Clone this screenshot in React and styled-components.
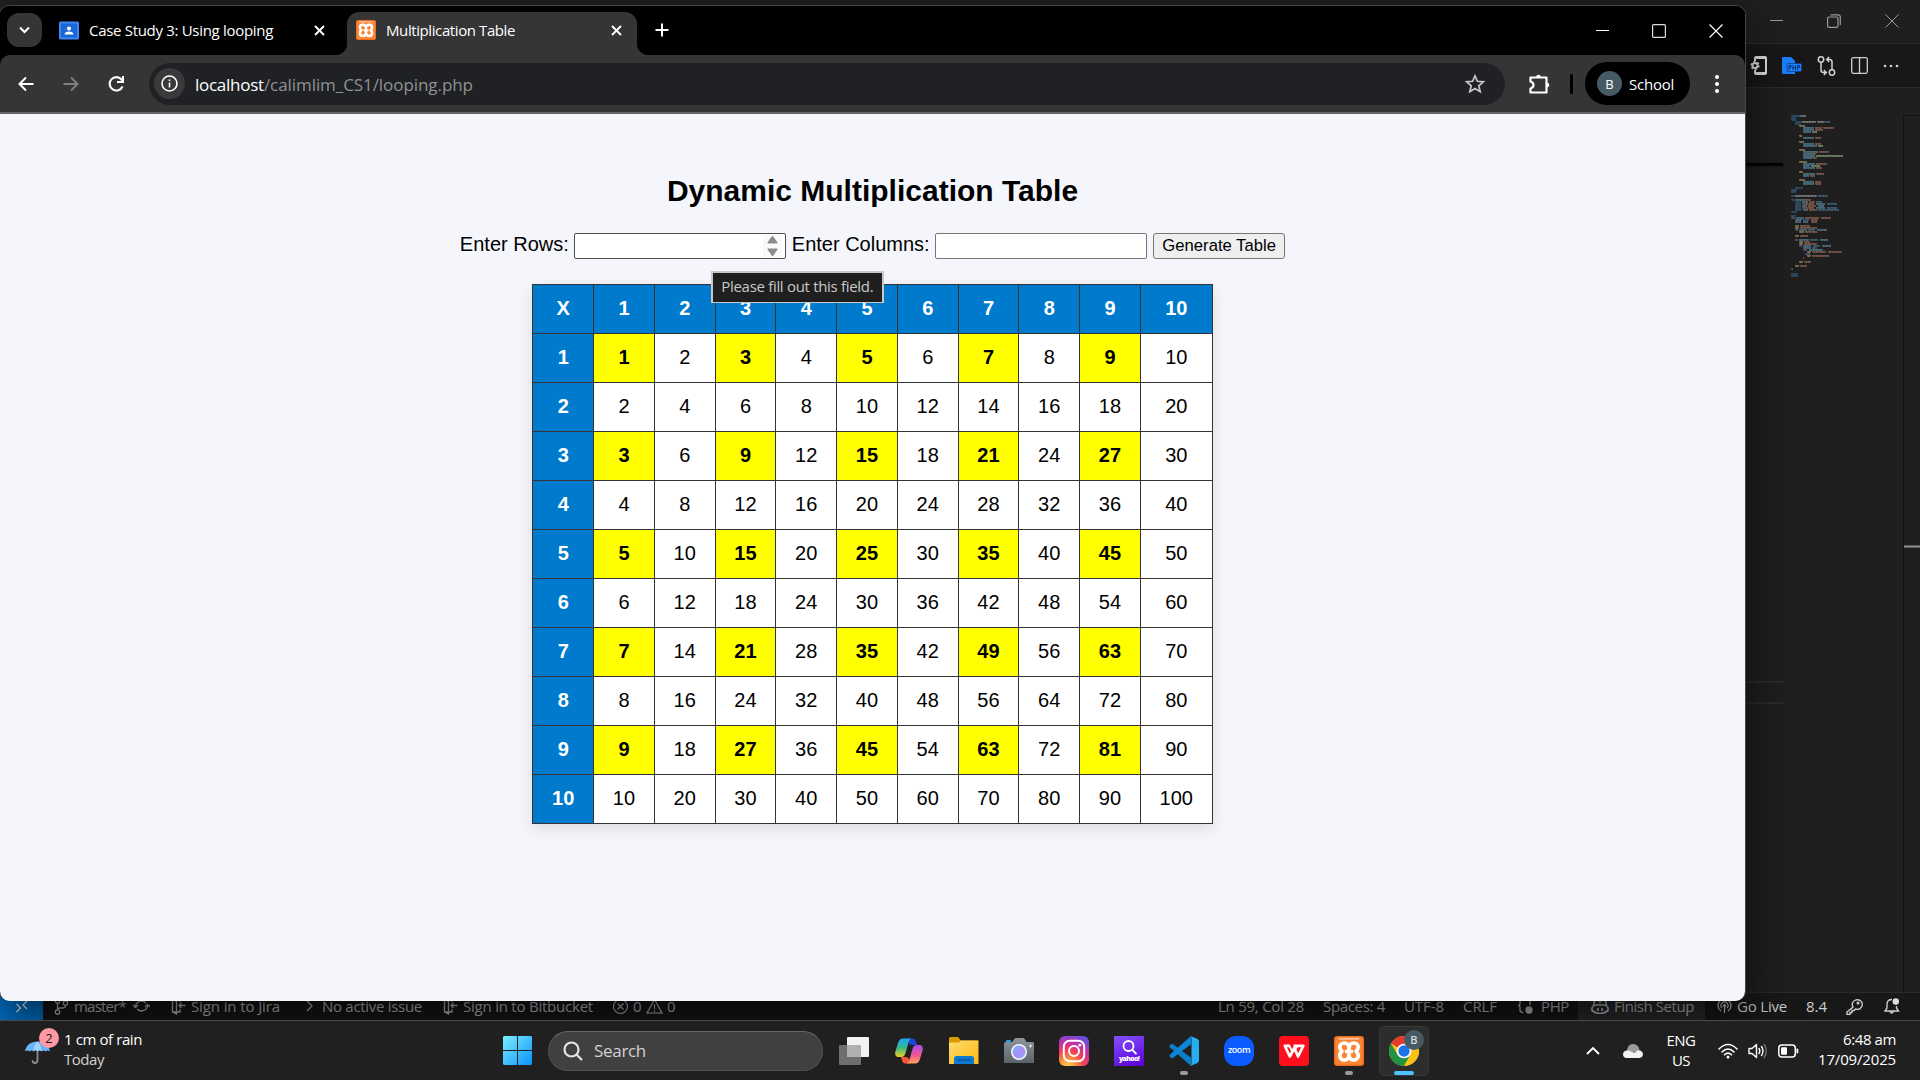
import React, { useLayoutEffect, useRef } from "react";
import styled, { createGlobalStyle, css } from "styled-components";

const UI = `"Open Sans", "Noto Sans", sans-serif`;

const GlobalStyle = createGlobalStyle`
  * { box-sizing: border-box; }
  body { margin: 0; background: #1f1f1f; overflow: hidden; }
  svg { display: block; flex: none; }
`;

/* ---------- text ---------- */
const LabelText = styled.span`
  font-family: ${UI};
  font-size: ${(p) => p.$size || 15}px;
  font-weight: ${(p) => p.$weight || 400};
  line-height: ${(p) => p.$line || 20}px;
  color: ${(p) => p.$color || "#fff"};
  white-space: pre;
  flex: none;
`;

/* Tracks the text so that it takes up exactly w pixels. */
function Label({ w, size, color, line, weight, children }) {
  const ref = useRef(null);
  useLayoutEffect(() => {
    const el = ref.current;
    el.style.letterSpacing = "0px";
    const natural = el.getBoundingClientRect().width;
    if (w) {
      const step = (w - natural) / el.textContent.length;
      el.style.letterSpacing = `${step}px`;
    }
  }, [w]);
  return (
    <LabelText ref={ref} $size={size} $color={color} $line={line} $weight={weight}>
      {children}
    </LabelText>
  );
}

/* ---------- desktop ---------- */
const Desktop = styled.div`
  position: relative;
  width: 1920px;
  height: 1080px;
  overflow: hidden;
  background: #1f1f1f;
`;

/* ---------- editor window ---------- */
const Editor = styled.div`
  position: absolute;
  inset: 0 0 60px 0;
  display: flex;
  flex-direction: column;
  background: #1f1f1f;
`;
const EditorTitle = styled.div`
  height: 44px;
  display: flex;
  justify-content: flex-end;
  align-items: flex-start;
  gap: 44px;
  padding: 14px 21px 0 0;
  background: #1f1f1f;
  border-bottom: 1px solid #2b2b2b;
`;
const EditorTabs = styled.div`
  height: 44px;
  display: flex;
  justify-content: flex-end;
  align-items: center;
  gap: 15px;
  padding-right: 21px;
  background: #181818;
  border-bottom: 1px solid #2b2b2b;
`;
const EditorBody = styled.div`
  flex: 1;
  display: flex;
  justify-content: flex-end;
  padding-top: 27px;
`;
const CodeEdge = styled.div`
  width: 83px;
  padding-top: 48px;
`;
const StickyShadow = styled.div`
  height: 2px;
  background: #000;
  box-shadow: 0 1px 2px #000;
`;
const CurrentLine = styled.div`
  height: 23px;
  margin-top: 516px;
  border-top: 2px solid #2c2c2c;
  border-bottom: 2px solid #2c2c2c;
`;
const MinimapPane = styled.div`
  width: 120px;
  padding-left: 7px;
`;
const Ruler = styled.div`
  width: 17px;
  border-left: 1px solid #131313;
  border-top: 1px solid #131313;
  padding-top: 429px;
`;
const RulerMark = styled.div`
  height: 3px;
  background: #909090;
  border-top: 1px solid #5a5a5a;
  border-bottom: 1px solid #5a5a5a;
`;
const StatusBar = styled.div`
  height: 28px;
  display: flex;
  align-items: center;
  padding-bottom: 1px;
  background: #181818;
  border-top: 1px solid #2b2b2b;
  color: #ccc;
`;
const Remote = styled.div`
  width: 43px;
  height: 27px;
  margin-bottom: -1px;
  display: flex;
  align-items: center;
  justify-content: center;
  background: #0078d4;
`;
const StatusItem = styled.div`
  display: flex;
  align-items: center;
  height: 25px;
  gap: ${(p) => p.$gap || 5}px;
  margin-left: ${(p) => p.$ml || 0}px;
  ${(p) =>
    p.$box &&
    css`
      height: 27px;
      background: #2c2d31;
      padding: 0 13px;
      width: 127px;
    `}
`;

/* ---------- browser window ---------- */
const Browser = styled.div`
  position: absolute;
  left: -1px;
  top: 5px;
  width: 1747px;
  height: 996px;
  display: flex;
  flex-direction: column;
  border: 1px solid #444;
  border-bottom: 0;
  border-radius: 10px;
  overflow: hidden;
  background: #000;
`;
const BrowserShadow = styled.div`
  position: absolute;
  left: 0;
  top: 5px;
  width: 1746px;
  height: 996px;
  border-radius: 10px;
  box-shadow: 0 22px 50px rgba(0, 0, 0, 0.66);
`;
const TabStrip = styled.div`
  height: 49px;
  flex: none;
  display: flex;
  background: #000;
  padding-left: 7px;
`;
const TabSearch = styled.div`
  width: 35px;
  height: 34px;
  margin-top: 7px;
  border-radius: 12px;
  background: #353535;
  display: flex;
  align-items: center;
  justify-content: center;
`;
const Tab = styled.div`
  position: relative;
  display: flex;
  align-items: center;
  height: 43px;
  margin-top: 6px;
  padding: 0 13px 7px ${(p) => (p.$active ? 9 : 17)}px;
  width: ${(p) => (p.$active ? 290 : 305)}px;
  gap: 10px;
  border-radius: 12px 12px 0 0;
  background: ${(p) => (p.$active ? "#353535" : "transparent")};
  ${(p) =>
    p.$active &&
    css`
      &::before,
      &::after {
        content: "";
        position: absolute;
        bottom: 0;
        width: 12px;
        height: 12px;
      }
      &::before {
        left: -12px;
        background: radial-gradient(circle at 0 0, transparent 12px, #353535 12.5px);
      }
      &::after {
        right: -12px;
        background: radial-gradient(circle at 100% 0, transparent 12px, #353535 12.5px);
      }
    `}
`;
const TabClose = styled.span`
  margin-right: ${(p) => p.$mr}px;
`;
const Grow = styled.div`
  flex: 1;
`;
const NewTab = styled.div`
  height: 49px;
  display: flex;
  align-items: center;
  padding: 0 0 1px 18px;
`;
const WindowControls = styled.div`
  display: flex;
  gap: 43px;
  padding: 18px 22px 0 0;
`;
const ToolbarWrap = styled.div`
  background: #000;
  flex: none;
`;
const Toolbar = styled.div`
  height: 59px;
  display: flex;
  align-items: center;
  padding: 0 18px 0 16px;
  background: #353535;
  border-bottom: 2px solid #666;
  border-radius: 10px 10px 0 0;
`;
const NavButtons = styled.div`
  display: flex;
  gap: 25px;
  width: 133px;
`;
const Omnibox = styled.div`
  width: 1357px;
  height: 42px;
  border-radius: 21px;
  background: #202124;
  display: flex;
  align-items: center;
  padding: 0 20px 0 5px;
`;
const SiteInfo = styled.div`
  width: 31px;
  height: 31px;
  border-radius: 50%;
  background: #3a3a3a;
  display: flex;
  align-items: center;
  justify-content: center;
  margin-right: 10px;
`;
const Url = styled.div`
  display: flex;
  padding-top: 2px;
`;
const Extensions = styled.span`
  margin-left: 23px;
`;
const Divider = styled.div`
  width: 3px;
  height: 20px;
  border-radius: 2px;
  background: #000;
  margin: 0 12px 0 20px;
`;
const Profile = styled.div`
  width: 105px;
  height: 43px;
  border-radius: 22px;
  background: #000;
  display: flex;
  align-items: center;
  gap: 7px;
  padding-left: 12px;
  margin-right: 17px;
`;
const Avatar = styled.div`
  width: 25px;
  height: 25px;
  border-radius: 50%;
  background: #455a64;
  display: flex;
  align-items: center;
  justify-content: center;
`;

/* ---------- web page ---------- */
const Page = styled.main`
  flex: 1;
  background: #f4f6fb;
  font-family: "Liberation Sans", Arial, sans-serif;
  font-size: 20px;
  line-height: 23px;
  color: #000;
  display: flex;
  flex-direction: column;
  align-items: center;
  padding-top: 60px;
`;
const Heading = styled.h2`
  margin: 0;
  font-size: 30px;
  line-height: 34px;
  font-weight: 700;
`;
const Form = styled.form`
  display: flex;
  align-items: center;
  margin: 25px 0 25px;
  height: 26px;
`;
const FieldLabel = styled.label`
  margin: -3px 5.5px 0 ${(p) => p.$ml || 0}px;
`;
const Field = styled.div`
  position: relative;
  width: 212px;
  height: 26px;
  background: #fff;
  border: 1px solid ${(p) => (p.$hover ? "#4f4f4f" : "#767676")};
  border-radius: 2px;
  display: flex;
  justify-content: flex-end;
  align-items: center;
  padding-right: 3px;
`;
const Spinner = styled.span`
  width: 19px;
  height: 22px;
  background: #fafafa;
  display: flex;
  align-items: center;
  justify-content: center;
`;
const Tooltip = styled.div`
  position: absolute;
  z-index: 2;
  left: 136px;
  top: 37px;
  width: 173px;
  height: 32px;
  padding: 0 0 3px 8px;
  display: flex;
  align-items: center;
  background: #1f1f1f;
  border: 2px solid #c8c8c8;
  border-bottom-width: 1px;
`;
const Submit = styled.button`
  width: 132px;
  height: 26px;
  margin-left: 6px;
  padding: 0;
  border: 1px solid #767676;
  border-radius: 3px;
  background: #efefef;
  color: #000;
  font: 16.67px/22px "Liberation Sans", Arial, sans-serif;
  white-space: nowrap;
`;
const Table = styled.table`
  border-collapse: collapse;
  background: #fff;
  box-shadow: 0 5px 15px rgba(0, 0, 0, 0.1);
  text-align: center;
`;
const Cell = styled.td`
  border: 1px solid #333;
  padding: 12px 18.75px 13px;
  height: 49px;
  font-weight: ${(p) => (p.$odd ? 700 : 400)};
  background: ${(p) => (p.$odd ? "#ff0" : "#fff")};
`;
const HeadCell = styled.th`
  border: 1px solid #333;
  padding: 12px 18.75px 13px;
  height: 49px;
  background: #007acc;
  color: #fff;
`;

/* ---------- taskbar ---------- */
const Taskbar = styled.div`
  position: absolute;
  left: 0;
  right: 0;
  bottom: 0;
  height: 60px;
  display: flex;
  align-items: center;
  background: #202020;
  border-top: 1px solid #484848;
`;
const Weather = styled.div`
  width: 503px;
  display: flex;
  padding-left: 25px;
  gap: 5px;
  align-items: center;
`;
const Lines = styled.div`
  display: flex;
  flex-direction: column;
  align-items: ${(p) => p.$align || "flex-start"};
  margin-top: ${(p) => p.$shift || 0}px;
`;
const WeatherIcon = styled.div`
  position: relative;
  width: 34px;
  height: 38px;
  padding-top: 9px;
`;
const Badge = styled.span`
  position: absolute;
  right: 0;
  top: -4px;
  width: 20px;
  height: 20px;
  border-radius: 50%;
  background: #ff99a4;
  display: flex;
  align-items: center;
  justify-content: center;
`;
const SearchBox = styled.div`
  width: 275px;
  height: 40px;
  margin: 0 8px 0 16px;
  border-radius: 20px;
  background: #404040;
  border: 1px solid #505050;
  border-top-color: #686868;
  display: flex;
  align-items: center;
  gap: 11px;
  padding-left: 14px;
`;
const AppRow = styled.div`
  display: flex;
  gap: 5px;
  margin-left: -2px;
`;
const AppButton = styled.div`
  position: relative;
  width: 50px;
  height: 50px;
  border-radius: 6px;
  display: flex;
  align-items: center;
  justify-content: center;
  background: ${(p) => (p.$active ? "#2d2d2d" : "transparent")};
  box-shadow: ${(p) => (p.$active ? "inset 0 0 0 1px #393939" : "none")};
`;
const Running = styled.span`
  position: absolute;
  bottom: 1px;
  left: 50%;
  transform: translateX(-50%);
  width: ${(p) => (p.$active ? 20 : 8)}px;
  height: 4px;
  border-radius: 2px;
  background: ${(p) => (p.$active ? "#4cc2ff" : "#9a9a9a")};
`;
const ProfileBadge = styled.span`
  position: absolute;
  right: 5px;
  top: 4px;
  width: 20px;
  height: 20px;
  border-radius: 50%;
  background: #455a64;
  display: flex;
  align-items: center;
  justify-content: center;
`;
const Tray = styled.div`
  margin-left: auto;
  display: flex;
  align-items: center;
  padding-right: 24px;
`;
const TraySlot = styled.div`
  width: ${(p) => p.$w}px;
  display: flex;
  justify-content: ${(p) => p.$justify || "flex-start"};
`;

/* ---------- icons ---------- */
const Stroke = ({ w = 16, h = w, vb = `0 0 ${w} ${h}`, c = "#fff", sw = 1.5, children }) => (
  <svg width={w} height={h} viewBox={vb} fill="none" stroke={c} strokeWidth={sw}>
    {children}
  </svg>
);

const Minus = ({ c }) => <Stroke w={13} h={14} c={c} sw={1}><path d="M0 6.5h13" /></Stroke>;
const Cross = ({ c, sw = 1.2 }) => <Stroke w={14} c={c} sw={sw}><path d="M.5 .5l13 13M13.5 .5l-13 13" /></Stroke>;
const TabCross = () => <Stroke w={11} sw={1.9}><path d="M1 1l9 9M10 1l-9 9" /></Stroke>;

const XamppLogo = ({ s = 30 }) => (
  <svg width={s} height={s} viewBox="0 0 30 30">
    <rect width="30" height="30" rx="3" fill="#ef6c1a" />
    <rect x="1.500" y="1.500" width="27" height="27" rx="2" fill="#f98536" />
    <path d="M4 1.800h22l-1.500 2h-19z" fill="#ffc299" />
    <path
      d="M15 11.500C14.500 8.500 13 7 10.500 7C7.500 7 5.800 9 5.800 11C5.800 13 6.800 14.200 8 15.300C6.800 16.300 5.800 17.600 5.800 19.500C5.800 22 7.500 24 10.500 24C13 24 14.500 22.500 15 19.500C15.500 22.500 17 24 19.500 24C22.500 24 24.200 22 24.200 19.500C24.200 17.600 23.200 16.300 22 15.300C23.200 14.200 24.200 13 24.200 11C24.200 9 22.500 7 19.500 7C17 7 15.500 8.500 15 11.500z"
      fill="none"
      stroke="#fff"
      strokeWidth="3.700"
      strokeLinejoin="round"
    />
    <path d="M12.300 15.500H17.700M15 12V19" stroke="#fff" strokeWidth="3.400" strokeLinecap="round" />
  </svg>
);

const ClassroomIcon = () => (
  <svg width="20" height="19" viewBox="0 0 20 19">
    <rect width="20" height="18" y=".5" rx="1.500" fill="#4285f4" />
    <rect x="2" y="2.500" width="16" height="14" fill="#1a67d8" />
    <circle cx="10" cy="7.500" r="2" fill="#fff" />
    <path d="M5.500 13.500c0-2 2-3 4.500-3s4.500 1 4.500 3z" fill="#fff" />
  </svg>
);

const SignInIcon = () => (
  <Stroke w={15} h={18} c="#ccc" sw={1.3}>
    <path d="M9 5V2H1.500v13H9v-3M1.500 2l4 2.500V17l-4-2M14.500 8.500H8M10.500 6L8 8.500l2.500 2.500" />
  </Stroke>
);

const ChromeIcon = () => (
  <svg width="30" height="30" viewBox="0 0 30 30">
    <circle cx="15" cy="15" r="15" fill="#fbc116" />
    <path d="M15 15L2 7.500A15 15 0 0 1 28 7.500H15z" fill="#e33b2e" />
    <path d="M2 7.500A15 15 0 0 0 15 30L21.500 18.800L8.500 18.800z" fill="#229342" />
    <path d="M28 7.500H15L21.500 18.800L15 30A15 15 0 0 0 28 7.500z" fill="#fbc116" />
    <circle cx="15" cy="15" r="7.300" fill="#fff" />
    <circle cx="15" cy="15" r="5.700" fill="#1a73e8" />
  </svg>
);

const StartIcon = () => (
  <svg width="29" height="29" viewBox="0 0 29 29">
    <defs>
      <linearGradient id="win" x1="0" y1="0" x2="1" y2="1" gradientUnits="objectBoundingBox">
        <stop offset="0" stopColor="#7cf0ff" />
        <stop offset="1" stopColor="#0a91fb" />
      </linearGradient>
    </defs>
    <path d="M1 0H14V14H0V1zM15 0H28L29 1V14H15zM0 15H14V29H1L0 28zM15 15H29V28L28 29H15z" fill="url(#win)" />
  </svg>
);

const TaskViewIcon = () => (
  <svg width="30" height="28" viewBox="0 0 30 28">
    <rect x="8" width="22" height="20" rx="1" fill="#f2f2f2" />
    <rect y="8" width="22" height="20" rx="1" fill="#7c7c7c" opacity=".85" />
    <rect x="8" y="8" width="14" height="12" fill="#b0b0b0" />
  </svg>
);

const CopilotIcon = () => (
  <svg width="28" height="26" viewBox="0 0 28 26">
    <defs>
      <linearGradient id="cpA" x1="0" y1="0" x2="0" y2="1">
        <stop offset="0" stopColor="#1ea7f5" />
        <stop offset=".5" stopColor="#35b88c" />
        <stop offset="1" stopColor="#f2cf1b" />
      </linearGradient>
      <linearGradient id="cpB" x1="0" y1="0" x2="0" y2="1">
        <stop offset="0" stopColor="#a64af0" />
        <stop offset=".55" stopColor="#f0568c" />
        <stop offset="1" stopColor="#ffa45c" />
      </linearGradient>
    </defs>
    <path d="M14 .5h3.500c2.500 0 3 1.500 3.700 4l.8 2.500h-5c-2 0-3-1-3.500-3z" fill="#1b45d6" />
    <path d="M14 25.500h-3.500c-2.500 0-3-1.500-3.700-4L6 19h5c2 0 3 1 3.500 3z" fill="#f5553d" />
    <path d="M8 .5h9c-2 0-2.800 1.500-3.500 4L10.500 15c-.7 2.500-2 4-4 4H3.500C.5 19-.3 16.500 .3 14L3 5C4 2 5.500 .5 8 .5z" fill="url(#cpA)" />
    <path d="M20 25.500h-9c2 0 2.800-1.500 3.500-4L17.500 11c.7-2.500 2-4 4-4h3c3 0 3.800 2.500 3.200 5L25 21c-1 3-2.500 4.500-5 4.500z" fill="url(#cpB)" />
  </svg>
);

const FolderIcon = () => (
  <svg width="30" height="27" viewBox="0 0 30 27">
    <defs>
      <linearGradient id="fold" x1="0" y1="0" x2="1" y2="1">
        <stop offset="0" stopColor="#ffdc6e" />
        <stop offset="1" stopColor="#fdb813" />
      </linearGradient>
    </defs>
    <path d="M0 1.500Q0 0 1.500 0H9l3 3.500H28.500V12H0z" fill="#dc9a00" />
    <path d="M0 5.500h9.500L12 3.500H29.500V27H0z" fill="url(#fold)" />
    <path d="M5 27V21.500Q5 19 7.500 19h15Q25 19 25 21.500V27z" fill="#0f78d0" />
    <path d="M8.500 23h13" stroke="#0b4f8c" strokeWidth="1.200" />
  </svg>
);

const CameraIcon = () => (
  <svg width="30" height="26" viewBox="0 0 30 26">
    <defs>
      <linearGradient id="lens" x1="0" y1="0" x2="1" y2="1">
        <stop offset="0" stopColor="#6fb4ff" />
        <stop offset=".6" stopColor="#b18af5" />
        <stop offset="1" stopColor="#58c8f0" />
      </linearGradient>
      <linearGradient id="cam" x1="0" y1="0" x2="0" y2="1">
        <stop offset="0" stopColor="#8d959d" />
        <stop offset="1" stopColor="#5c6369" />
      </linearGradient>
    </defs>
    <rect x="2" y="2" width="5" height="4" rx="1" fill="#24a3e8" />
    <path d="M0 5.500Q0 4 1.500 4H8L10.500 .8Q11 0 12 0h7q1 0 1.500 .8L22.500 4h6Q30 4 30 5.500V25H0z" fill="url(#cam)" />
    <circle cx="15" cy="14" r="8" fill="#f4f6f8" />
    <circle cx="15" cy="14" r="6.500" fill="url(#lens)" />
    <path d="M26.500 6.500v3M25 8h3" stroke="#fff" strokeWidth=".8" />
  </svg>
);

const InstagramIcon = () => (
  <svg width="30" height="30" viewBox="0 0 30 30">
    <defs>
      <radialGradient id="ig" cx=".28" cy="1.050" r="1.100">
        <stop offset="0" stopColor="#ffd35c" />
        <stop offset=".25" stopColor="#fd9a3d" />
        <stop offset=".5" stopColor="#f5434f" />
        <stop offset=".75" stopColor="#c92fa6" />
        <stop offset="1" stopColor="#6a4fd8" />
      </radialGradient>
    </defs>
    <rect width="30" height="30" rx="6" fill="url(#ig)" />
    <g fill="none" stroke="#fff" strokeWidth="2">
      <rect x="4.800" y="4.800" width="20.400" height="20.400" rx="6" />
      <circle cx="15" cy="15" r="5" />
    </g>
    <circle cx="20.800" cy="9.200" r="1.400" fill="#fff" />
  </svg>
);

const YahooTile = styled.div`
  width: 30px;
  height: 30px;
  background: linear-gradient(160deg, #8250ff, #5a00d0);
  display: flex;
  flex-direction: column;
  align-items: center;
  padding-top: 4px;
`;
const ZoomTile = styled.div`
  width: 30px;
  height: 30px;
  border-radius: 12px;
  background: #0b5cff;
  display: flex;
  align-items: center;
  justify-content: center;
  padding-bottom: 1px;
`;

const VSCodeIcon = () => (
  <svg width="30" height="30" viewBox="0 0 30 30">
    <path d="M1 9.300L3.200 7.600L22 21.700V30L.8 11.200Q0 10.200 1 9.300z" fill="#0b7dc9" />
    <path d="M1 20.700L3.200 22.400L22 8.300V0L.8 18.800Q0 19.800 1 20.700z" fill="#0a86d4" />
    <path d="M21.500 0L28.500 3Q30 3.700 30 5.300V24.700Q30 26.300 28.500 27L21.500 30Q22.500 29 22.500 27.500V2.500Q22.500 1 21.500 0z" fill="#26aef0" />
  </svg>
);

const WpsIcon = () => (
  <svg width="30" height="30" viewBox="0 0 30 30">
    <rect width="30" height="30" rx="4" fill="#ff0f1e" />
    <path d="M11 9.800H5.800L10.800 20.500L15.300 12L19 20.500L24.300 9.800H14.500" fill="none" stroke="#fff" strokeWidth="2.700" strokeLinejoin="round" />
    <path d="M10.500 10L13 15M18.500 10L16 14" fill="none" stroke="#fff" strokeWidth="1.800" />
  </svg>
);

const UmbrellaIcon = () => (
  <svg width="25" height="23" viewBox="0 0 25 23">
    <path d="M12.500 7V19q0 3-2.500 3t-2.500-2.800" fill="none" stroke="#8d8d8d" strokeWidth="1.800" />
    <path d="M0 10.500C1 4 6 .5 12.500 .5S24 4 25 10.500q-2.500-2-4.500 0q-2-2-4 0q-2-2-4 0q-2-2-4 0q-2-2-4 0Q2.500 8.500 0 10.500z" fill="#69b5f7" />
    <path d="M8.500 10C9 5 10.500 2 12.500 .5C14.500 2 16 5 16.500 10q-2-1.800-4 .3Q10.500 8 8.500 10z" fill="#a5d4fb" />
  </svg>
);

/* ---------- minimap ---------- */
const B = "#3f6079", G = "#7d7d7d", O = "#7d5b4c", T = "#4f7486", Y = "#80805c", P = "#6b5070", D = "#31516e", N = "#7a8a6c";
const minimap = [
  [0, 0, 9, D, 9, 6, G], [2, 0, 5, D], [4, 0, 5, D],
  [6, 4, 7, D, 11, 14, G, 26, 7, G, 33, 6, B], [8, 4, 6, D],
  [10, 8, 6, Y], [12, 12, 11, T, 24, 7, O, 32, 11, O], [14, 12, 11, T, 24, 8, O], [16, 12, 8, T, 21, 5, N],
  [20, 8, 3, Y], [22, 12, 11, T, 24, 6, O], [26, 8, 5, Y],
  [28, 12, 11, T, 24, 6, O], [30, 12, 14, T, 27, 5, N], [34, 8, 6, Y],
  [36, 12, 15, T, 28, 10, O], [38, 12, 9, T, 21, 4, O], [40, 12, 12, T, 25, 27, N], [42, 12, 10, T, 22, 4, O],
  [46, 8, 8, Y], [48, 12, 12, T, 25, 11, O], [50, 12, 7, T, 20, 9, N], [52, 12, 12, T, 25, 6, O], [56, 8, 4, Y],
  [58, 12, 12, T, 25, 8, O], [60, 12, 6, T, 19, 5, O], [64, 8, 6, Y],
  [66, 12, 11, T, 24, 6, O], [68, 12, 11, T, 24, 6, O],
  [72, 4, 8, D], [74, 0, 6, D], [76, 0, 5, D],
  [80, 0, 4, D, 4, 22, G, 27, 10, B],
  [84, 0, 5, D, 5, 8, T, 13, 7, O], [86, 4, 6, D, 11, 6, T, 18, 6, O, 25, 6, B],
  [88, 4, 6, D, 11, 12, O, 25, 9, T, 36, 10, B], [90, 4, 6, D, 11, 5, T, 17, 8, O, 27, 6, T],
  [92, 4, 6, D, 11, 12, O, 25, 9, T, 36, 10, B], [94, 4, 7, D, 12, 5, T, 18, 8, O, 27, 21, B], [96, 0, 6, D],
  [100, 0, 5, D], [102, 0, 4, P, 5, 8, T, 14, 14, O, 30, 10, O],
  [104, 4, 7, T, 12, 6, B, 20, 7, O], [106, 4, 6, T, 12, 5, T, 20, 6, O],
  [110, 4, 4, Y, 9, 10, O], [112, 4, 4, Y, 9, 17, O], [114, 4, 3, P, 8, 8, T, 17, 7, B, 26, 10, T],
  [116, 8, 5, Y, 14, 12, O], [120, 4, 4, Y, 9, 8, O],
  [124, 4, 3, P, 8, 10, T, 19, 8, B, 29, 8, T], [126, 8, 4, Y, 13, 6, O], [128, 8, 4, Y, 13, 13, O],
  [130, 8, 3, P, 12, 8, T, 22, 7, B, 31, 9, T], [132, 12, 8, T, 21, 5, B], [134, 12, 4, P, 18, 14, T],
  [136, 16, 4, Y, 21, 14, O, 37, 14, O], [138, 14, 5, P], [140, 16, 4, Y, 21, 17, O],
  [142, 12, 1, G], [146, 8, 4, Y, 13, 7, O], [150, 4, 4, Y, 9, 7, O], [153, 0, 2, B],
  [158, 0, 7, D], [160, 0, 7, D],
];
const Minimap = () => (
  <svg width="60" height="165" viewBox="0 0 60 165" shapeRendering="crispEdges">
    {minimap.map(([y, ...runs]) => {
      const bars = [];
      for (let i = 0; i < runs.length; i += 3)
        bars.push(
          <path key={i} d={`M${runs[i] + 1} ${y + 1}h${runs[i + 1]}`} stroke={runs[i + 2]} strokeWidth="2" opacity=".85" />,
          <path key={`d${i}`} d={`M${runs[i] + 1} ${y + 1.5}h${runs[i + 1]}`} stroke="#1f1f1f" strokeWidth="1" strokeDasharray="1 2" opacity=".4" />
        );
      return <g key={y}>{bars}</g>;
    })}
  </svg>
);

const nums = Array.from({ length: 10 }, (_, i) => i + 1);

function EditorWindow() {
  return (
    <Editor>
      <EditorTitle>
        <Minus c="#999" />
        <Stroke w={14} c="#999" sw={1.2}>
          <rect x=".6" y="3" width="10.400" height="10.400" rx="1.500" />
          <path d="M3.500 .8h7.500q2.300 0 2.300 2.300v8" />
        </Stroke>
        <Cross c="#999" sw={1} />
      </EditorTitle>
      <EditorTabs>
        <svg width="17" height="20" viewBox="0 0 17 20">
          <path d="M4 5V2q0-2 2-2h9q2 0 2 2v15q0 2-2 2H6q-2 0-2-2v-3h2v2h9V3H6v2z" fill="#e6e6e6" />
          <circle cx="5" cy="9.500" r="2.600" fill="none" stroke="#e6e6e6" strokeWidth="2" />
          <circle cx="5" cy="9.500" r="4" fill="none" stroke="#e6e6e6" strokeWidth="1.300" strokeDasharray="2 2.190" />
        </svg>
        <svg width="20" height="18" viewBox="0 0 20 18">
          <path d="M1 0h8l4 4v13H1q-1 0-1-1V1q0-1 1-1z" fill="#1a80ff" />
          <rect x="5" y="6.500" width="14.500" height="8" rx="1" fill="#1a80ff" stroke="#0c3c80" strokeWidth=".7" />
          <path d="M7 13V8.500h2v2H7M11 8.500V13M13.500 8.500V13M11 10.800h2.500M15.500 13V8.500h2v2h-2" fill="none" stroke="#0a2c5c" strokeWidth=".9" />
        </svg>
        <Stroke w={19} h={20} c="#d0d0d0" sw={1.5}>
          <circle cx="4" cy="3.500" r="2.700" />
          <circle cx="15" cy="16.500" r="2.700" />
          <path d="M4 6v8q0 2.500 2.500 2.500H9M6.800 14l2.500 2.500L6.800 19M15 14V6q0-2.500-2.500-2.500H10M12.200 1L9.700 3.500L12.200 6" />
        </Stroke>
        <Stroke w={17} c="#d0d0d0" sw={1.3}>
          <rect x=".7" y=".7" width="15.600" height="15.600" rx="1.500" />
          <path d="M8.500 1v15" />
        </Stroke>
        <svg width="16" height="4" viewBox="0 0 16 4" fill="#d0d0d0">
          <circle cx="2" cy="2" r="1.300" />
          <circle cx="8" cy="2" r="1.300" />
          <circle cx="14" cy="2" r="1.300" />
        </svg>
      </EditorTabs>
      <EditorBody>
        <CodeEdge>
          <StickyShadow />
          <CurrentLine />
        </CodeEdge>
        <MinimapPane>
          <Minimap />
        </MinimapPane>
        <Ruler>
          <RulerMark />
        </Ruler>
      </EditorBody>
      <StatusBar>
        <Remote>
          <Stroke w={12} h={14} sw={1.3}><path d="M.5 4l4 4l-4 4M11 1L7 5l4 4" /></Stroke>
        </Remote>
        <StatusItem $ml={11}>
          <Stroke w={15} h={17} c="#ccc" sw={1.3}>
            <circle cx="3.500" cy="14" r="2.200" /><circle cx="3.500" cy="3" r="2.200" /><circle cx="11.500" cy="5" r="2.200" />
            <path d="M3.500 5v7M11.500 7.500q0 2.500-3 2.500H6q-2.500 0-2.500 2" />
          </Stroke>
          <Label w={52} size={15} color="#ccc">master*</Label>
        </StatusItem>
        <StatusItem $ml={7}>
          <Stroke w={17} h={14} c="#ccc" sw={1.3}>
            <path d="M2.500 8a6 5.500 0 0 1 10.500-4M14.500 6a6 5.500 0 0 1-10.500 4M0 6l2.500 2.500L5 6M12 8l2.500-2.500L17 8" />
          </Stroke>
        </StatusItem>
        <StatusItem $ml={21}>
          <SignInIcon />
          <Label w={89} size={15} color="#ccc">Sign in to Jira</Label>
        </StatusItem>
        <StatusItem $ml={26} $gap={9}>
          <Stroke w={7} h={12} c="#ccc" sw={1.3}><path d="M1 1l5 5l-5 5" /></Stroke>
          <Label w={100} size={15} color="#ccc">No active issue</Label>
        </StatusItem>
        <StatusItem $ml={21}>
          <SignInIcon />
          <Label w={130} size={15} color="#ccc">Sign in to Bitbucket</Label>
        </StatusItem>
        <StatusItem $ml={19} $gap={4}>
          <Stroke w={17} c="#ccc" sw={1.2}>
            <circle cx="8.500" cy="8.500" r="7" /><path d="M5.500 5.500l6 6M11.500 5.500l-6 6" />
          </Stroke>
          <Label w={9} size={15} color="#ccc">0</Label>
          <Stroke w={17} c="#ccc" sw={1.2}>
            <path d="M8.500 1.500L16 15H1zM8.500 6v5M8.500 12v1.500" />
          </Stroke>
          <Label w={9} size={15} color="#ccc">0</Label>
        </StatusItem>
        <Grow />
        <Label w={86} size={15} color="#ccc">Ln 59, Col 28</Label>
        <StatusItem $ml={19}><Label w={62} size={15} color="#ccc">Spaces: 4</Label></StatusItem>
        <StatusItem $ml={19}><Label w={40} size={15} color="#ccc">UTF-8</Label></StatusItem>
        <StatusItem $ml={19}><Label w={34} size={15} color="#ccc">CRLF</Label></StatusItem>
        <StatusItem $ml={20} $gap={7}>
          <Stroke w={17} h={18} c="#ccc" sw={1.3}>
            <path d="M6 2Q3 2 3 4.500V6.500Q3 8.500 1 8.500Q3 8.500 3 10.500V13Q3 15.500 6 15.500M10 2q3 0 3 2.500V8" />
            <circle cx="12" cy="13" r="3" fill="#ccc" />
          </Stroke>
          <Label w={28} size={15} color="#ccc">PHP</Label>
        </StatusItem>
        <StatusItem $ml={9} $box>
          <svg width="18" height="15" viewBox="0 0 18 15">
            <path d="M4 1.500q4-2 5 1q1-3 5-1q1.500 1.500 1 5q2 1 2 3v2q-3.500 3-8 3t-8-3v-2q0-2 2-3q-.500-3.500 1-5z" fill="none" stroke="#ccc" strokeWidth="1.700" />
            <path d="M3 6h12M6.800 9v3M11.200 9v3" stroke="#ccc" strokeWidth="1.700" />
          </svg>
          <Label w={80} size={15} color="#ccc">Finish Setup</Label>
        </StatusItem>
        <StatusItem $ml={12}>
          <Stroke w={15} h={16} c="#ccc" sw={1.2}>
            <path d="M4 13A6.500 6.500 0 1 1 11 13M5 10a3.500 3.500 0 1 1 5 0" />
            <circle cx="7.500" cy="7.500" r="1" fill="#ccc" /><path d="M7.500 9v6" />
          </Stroke>
          <Label w={50} size={15} color="#ccc">Go Live</Label>
        </StatusItem>
        <StatusItem $ml={19}><Label w={21} size={15} color="#ccc">8.4</Label></StatusItem>
        <StatusItem $ml={19}>
          <Stroke w={17} h={17} c="#ccc" sw={1.4}>
            <path d="M7 9A5 4.800 0 1 1 9.500 11L8 12.500H6v2H4V16.500H1V14z" /><circle cx="12" cy="5" r=".8" fill="#ccc" />
          </Stroke>
        </StatusItem>
        <StatusItem $ml={21}>
          <Stroke w={16} h={17} c="#ccc" sw={1.4}>
            <path d="M8 1.500Q3 1.500 3 6.500V10L1 13H14.500L12.500 10V8M6 13.500q1.500 3 3.500 0" /><circle cx="11.800" cy="3.500" r="3.200" fill="#ddd" stroke="none" />
          </Stroke>
        </StatusItem>
        <StatusItem $ml={20} />
      </StatusBar>
    </Editor>
  );
}

function BrowserWindow() {
  return (
    <Browser>
      <TabStrip>
        <TabSearch><Stroke w={11} h={8} sw={2}><path d="M1 1.500l4.500 4.500L10 1.500" /></Stroke></TabSearch>
        <Tab>
          <ClassroomIcon />
          <Label w={184} size={15}>Case Study 3: Using looping</Label>
          <Grow />
          <TabClose $mr={9}><TabCross /></TabClose>
        </Tab>
        <Tab $active>
          <XamppLogo s={20} />
          <Label w={129} size={15}>Multiplication Table</Label>
          <Grow />
          <TabClose $mr={2}><TabCross /></TabClose>
        </Tab>
        <NewTab><Stroke w={14} sw={2}><path d="M7 .5v13M.5 7h13" /></Stroke></NewTab>
        <Grow />
        <WindowControls>
          <Minus c="#fff" />
          <Stroke w={14} c="#ddd" sw={1.2}><rect x=".6" y=".6" width="12.800" height="12.800" rx="1" /></Stroke>
          <Cross c="#fff" />
        </WindowControls>
      </TabStrip>
      <ToolbarWrap>
        <Toolbar>
          <NavButtons>
            <Stroke w={20} sw={2}><path d="M17.500 10H4M10 3.500L3.500 10l6.500 6.500" /></Stroke>
            <Stroke w={20} sw={2} c="#7f7f7f"><path d="M2.500 10H16M10 3.500L16.500 10L10 16.500" /></Stroke>
            <Stroke w={20} sw={2.1}><path d="M16.500 12.500A6.700 6.700 0 1 1 15.500 5.500L17 7.500M17 2v6h-6" /></Stroke>
          </NavButtons>
          <Omnibox>
            <SiteInfo>
              <Stroke w={17} sw={1.6}><circle cx="8.500" cy="8.500" r="7.500" /><path d="M8.500 7.500V12.500M8.500 4.500V6" /></Stroke>
            </SiteInfo>
            <Url>
              <Label w={69} size={17} line={24}>localhost</Label>
              <Label w={209} size={17} line={24} color="#8f9194">/calimlim_CS1/looping.php</Label>
            </Url>
            <Grow />
            <Stroke w={20} c="#c7c7c7" sw={1.7}>
              <path d="M10 1.800l2.400 5.500l6 .5l-4.600 4l1.400 5.900L10 14.500l-5.200 3.200l1.400-5.900l-4.600-4l6-.5z" />
            </Stroke>
          </Omnibox>
          <Extensions>
            <Stroke w={22} sw={2.2}>
              <path d="M2.500 4.500H18.500V19.500H2.500V15.500Q5.500 14.500 5.500 12T2.500 8.500z" strokeLinejoin="round" />
              <path d="M8.200 4a2.300 2.300 0 0 1 4.600 0zM19 9.700a2.300 2.300 0 0 1 0 4.600z" fill="#fff" stroke="none" />
            </Stroke>
          </Extensions>
          <Divider />
          <Profile>
            <Avatar><Label size={13} line={16}>B</Label></Avatar>
            <Label w={45} size={15}>School</Label>
          </Profile>
          <svg width="20" height="18" viewBox="0 0 20 18" fill="#fff">
            <circle cx="10" cy="2" r="2" /><circle cx="10" cy="9" r="2" /><circle cx="10" cy="16" r="2" />
          </svg>
        </Toolbar>
      </ToolbarWrap>
      <Page>
        <Heading>Dynamic Multiplication Table</Heading>
        <Form>
          <FieldLabel>Enter Rows:</FieldLabel>
          <Field $hover>
            <Spinner>
              <svg width="11" height="20" viewBox="0 0 11 20" fill="#8b8b8b">
                <path d="M5.500 0q.7 0 1.200 .9L10.500 6.500q.3 1-.7 1H1.200q-1 0-.7-1L4.300 .9Q4.800 0 5.500 0zM5.500 20q.7 0 1.200-.9l3.800-5.600q.3-1-.7-1H1.200q-1 0-.7 1l3.800 5.600q.5 .9 1.200 .9z" />
              </svg>
            </Spinner>
            <Tooltip><Label w={152} size={15} color="#c8c8c8">Please fill out this field.</Label></Tooltip>
          </Field>
          <FieldLabel $ml={5.5}>Enter Columns:</FieldLabel>
          <Field />
          <Submit type="button">Generate Table</Submit>
        </Form>
        <Table>
          <tbody>
            <tr>
              <HeadCell>X</HeadCell>
              {nums.map((n) => <HeadCell key={n}>{n}</HeadCell>)}
            </tr>
            {nums.map((r) => (
              <tr key={r}>
                <HeadCell>{r}</HeadCell>
                {nums.map((c) => <Cell key={c} $odd={(r * c) % 2 === 1}>{r * c}</Cell>)}
              </tr>
            ))}
          </tbody>
        </Table>
      </Page>
    </Browser>
  );
}

function TaskbarRow() {
  return (
    <Taskbar>
      <Weather>
        <WeatherIcon>
          <UmbrellaIcon />
          <Badge><Label size={13} line={16} color="#1b1b1b">2</Label></Badge>
        </WeatherIcon>
        <Lines $shift={-3}>
          <Label w={78} size={15}>1 cm of rain</Label>
          <Label w={40} size={15} color="#d0d0d0">Today</Label>
        </Lines>
      </Weather>
      <StartIcon />
      <SearchBox>
        <Stroke w={20} sw={2.2} c="#e4e4e4"><circle cx="8.500" cy="8.500" r="7" /><path d="M13.500 13.500l5.500 5.500" /></Stroke>
        <Label w={52} size={17} line={24} color="#d2d2d2">Search</Label>
      </SearchBox>
      <AppRow>
        <AppButton><TaskViewIcon /></AppButton>
        <AppButton><CopilotIcon /></AppButton>
        <AppButton><FolderIcon /></AppButton>
        <AppButton><CameraIcon /></AppButton>
        <AppButton><InstagramIcon /></AppButton>
        <AppButton>
          <YahooTile>
            <Stroke w={15} sw={1.8}><circle cx="6.500" cy="6" r="5" /><path d="M10 9.500l4.500 4.500" /></Stroke>
            <Label w={20} size={7} line={8} weight={800}>yahoo!</Label>
          </YahooTile>
        </AppButton>
        <AppButton><VSCodeIcon /><Running /></AppButton>
        <AppButton><ZoomTile><Label w={22} size={9} line={10} weight={600}>zoom</Label></ZoomTile></AppButton>
        <AppButton><WpsIcon /></AppButton>
        <AppButton><XamppLogo /><Running /></AppButton>
        <AppButton $active>
          <ChromeIcon />
          <ProfileBadge><Label size={11} line={14} weight={600} color="#ddd">B</Label></ProfileBadge>
          <Running $active />
        </AppButton>
      </AppRow>
      <Tray>
        <TraySlot $w={37}><Stroke w={14} h={9} sw={1.9}><path d="M1 8l6-6l6 6" /></Stroke></TraySlot>
        <TraySlot $w={37}>
          <svg width="20" height="14" viewBox="0 0 20 14">
            <path d="M4 8Q4 0 10 0q5 0 6.500 5.500L10 9z" fill="#9b9b9b" />
            <path d="M3 14q-3-.5-3-4q.5-3.500 4-3.500h2L11 9l4-3q5 .5 5 4.500q-.5 3-3.500 3.500z" fill="#f2f2f2" />
          </svg>
        </TraySlot>
        <TraySlot $w={42} $justify="center">
          <Lines $align="center" $shift={-1}>
            <Label w={29} size={15}>ENG</Label>
            <Label w={18} size={15}>US</Label>
          </Lines>
        </TraySlot>
        <TraySlot $w={16} />
        <TraySlot $w={30}>
          <Stroke w={20} h={16} sw={1.6}>
            <path d="M1 6q9-9 18 0M4 9q6-6 12 0M6.500 11.800q3.500-3.500 7 0" strokeLinecap="round" /><circle cx="10" cy="14" r="1.500" fill="#fff" stroke="none" />
          </Stroke>
        </TraySlot>
        <TraySlot $w={30}>
          <Stroke w={20} h={16} sw={1.4}>
            <path d="M1 5.500h3L8.500 1.500v13L4 10.500H1z" strokeLinejoin="round" /><path d="M11 5.500q1.700 2.500 0 5M13.500 3.500q3 4.500 0 9" strokeLinecap="round" /><path d="M16 1q4.500 7 0 14" stroke="#707070" />
          </Stroke>
        </TraySlot>
        <TraySlot $w={20}>
          <svg width="21" height="14" viewBox="0 0 21 14">
            <rect x=".8" y="1" width="16.500" height="12" rx="3" fill="none" stroke="#fff" strokeWidth="1.500" />
            <rect x="3" y="3.200" width="6" height="7.600" rx="1" fill="#fff" /><rect x="18.500" y="4.500" width="1.800" height="5" rx=".9" fill="#fff" />
          </svg>
        </TraySlot>
        <TraySlot $w={98} $justify="flex-end">
          <Lines $align="flex-end" $shift={-3}>
            <Label w={53} size={15}>6:48 am</Label>
            <Label w={78} size={15}>17/09/2025</Label>
          </Lines>
        </TraySlot>
      </Tray>
    </Taskbar>
  );
}

export default function App() {
  return (
    <Desktop>
      <GlobalStyle />
      <EditorWindow />
      <BrowserShadow />
      <BrowserWindow />
      <TaskbarRow />
    </Desktop>
  );
}
